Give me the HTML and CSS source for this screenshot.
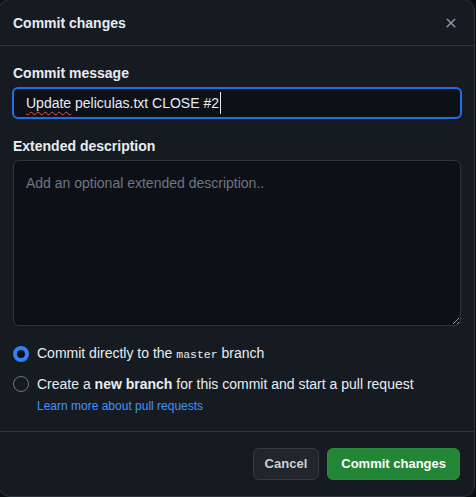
FILE: index.html
```html
<!DOCTYPE html>
<html lang="en">
<head>
<meta charset="utf-8">
<link rel="stylesheet" href="styles.css">
</head>
<body>
<div class="dialog">
  <div class="dialog-header">
    <h1 class="dialog-title">Commit changes</h1>
    <button class="close-btn" aria-label="Close">
      <svg width="16" height="16" viewBox="0 0 16 16"><path d="M3.72 3.72a.75.75 0 0 1 1.06 0L8 6.94l3.22-3.22a.749.749 0 0 1 1.06 1.06L9.06 8l3.22 3.22a.749.749 0 0 1-1.06 1.06L8 9.06l-3.22 3.22a.749.749 0 0 1-1.06-1.06L6.94 8 3.72 4.78a.75.75 0 0 1 0-1.06Z" fill="currentColor"/></svg>
    </button>
  </div>
  <div class="dialog-body">
    <label class="field-label">Commit message</label>
    <div class="text-input"><span class="misspelled">Update</span>&nbsp;peliculas.txt CLOSE #2<span class="caret"></span></div>
    <label class="field-label second">Extended description</label>
    <textarea class="text-area" placeholder="Add an optional extended description.."></textarea>
    <div class="radio-row first-radio">
      <span class="radio checked"></span>
      <span class="radio-text">Commit directly to the <code class="branch">master</code> branch</span>
    </div>
    <div class="radio-row">
      <span class="radio"></span>
      <span class="radio-text">Create a <strong>new branch</strong> for this commit and start a pull request</span>
    </div>
    <a class="learn-link" href="#">Learn more about pull requests</a>
  </div>
  <div class="dialog-footer">
    <button class="btn btn-cancel">Cancel</button>
    <button class="btn btn-primary">Commit changes</button>
  </div>
</div>
</body>
</html>
```

FILE: styles.css
```css
* { box-sizing: border-box; }
html, body {
  margin: 0;
  padding: 0;
  background: #0b0e13;
  height: 497px;
  overflow: hidden;
}
body {
  font-family: "Liberation Sans", Arial, sans-serif;
  color: #e6edf3;
  font-size: 14px;
}
.dialog {
  width: 477px;
  margin: -1px 0 0 -2px;
  background: #161b22;
  border: 1px solid #30363d;
  border-radius: 12px;
  display: flex;
  flex-direction: column;
}
.dialog-header {
  height: 46px;
  border-bottom: 1px solid #30363d;
  display: flex;
  align-items: center;
  justify-content: space-between;
  padding: 0 15px 0 14px;
}
.dialog-title {
  margin: 0;
  font-size: 14px;
  font-weight: 700;
  line-height: 20px;
}
.close-btn {
  background: none;
  border: none;
  color: #8d96a0;
  padding: 0;
  width: 16px;
  height: 16px;
  display: flex;
}
.dialog-body {
  padding: 17px 13px 16px 14px;
  display: flex;
  flex-direction: column;
  align-items: flex-start;
}
.field-label {
  font-weight: 700;
  line-height: 20px;
  margin-bottom: 4px;
}
.field-label.second { margin-top: 17px; }
.text-input {
  width: 450px;
  margin-left: -1px;
  height: 32px;
  border: 2px solid #1f6feb;
  border-radius: 6px;
  background: #0d1117;
  padding: 0 12px;
  display: flex;
  align-items: center;
  line-height: 20px;
  white-space: nowrap;
}
.misspelled {
  text-decoration: underline wavy #e5534b;
  text-decoration-thickness: 1px;
  text-underline-offset: 3px;
}
.caret {
  display: inline-block;
  width: 1px;
  height: 22px;
  background: #e6edf3;
  margin-left: 1px;
}
.text-area {
  width: 448px;
  height: 166px;
  background: #0d1117;
  border: 1px solid #30363d;
  border-radius: 6px;
  color: #e6edf3;
  font-family: inherit;
  font-size: 14px;
  line-height: 20px;
  padding: 12px 12px;
  color-scheme: dark;
  outline: none;
}
.text-area::placeholder { color: #6e7681; }
.radio-row {
  display: flex;
  align-items: center;
  gap: 8px;
  line-height: 20px;
  margin-top: 9px;
}
.radio-row.first-radio { margin-top: 17px; }
.radio {
  width: 16px;
  height: 16px;
  border-radius: 50%;
  border: 1px solid #6e7681;
  flex: none;
}
.radio.checked {
  border: 4px solid #2f81f7;
  background: #0d1117;
}
.radio-text strong { font-weight: 700; }
.branch {
  font-family: "Liberation Mono", monospace;
  font-size: 11.5px;
}
.learn-link {
  color: #4493f8;
  text-decoration: none;
  font-size: 12px;
  line-height: 18px;
  margin: 3px 0 0 24px;
}
.dialog-footer {
  border-top: 1px solid #30363d;
  padding: 16px 14px 16px 16px;
  display: flex;
  justify-content: flex-end;
  gap: 8px;
}
.btn {
  height: 32px;
  border-radius: 6px;
  font-family: inherit;
  font-size: 13px;
  font-weight: 700;
  padding: 0 11px;
  line-height: 20px;
  white-space: nowrap;
  flex: none;
}
.btn-cancel {
  background: #21262d;
  border: 1px solid #363b42;
  color: #c9d1d9;
}
.btn-primary {
  background: #238636;
  border: 1px solid #2b8a3e;
  color: #ffffff;
  padding: 0 13px;
}
```
